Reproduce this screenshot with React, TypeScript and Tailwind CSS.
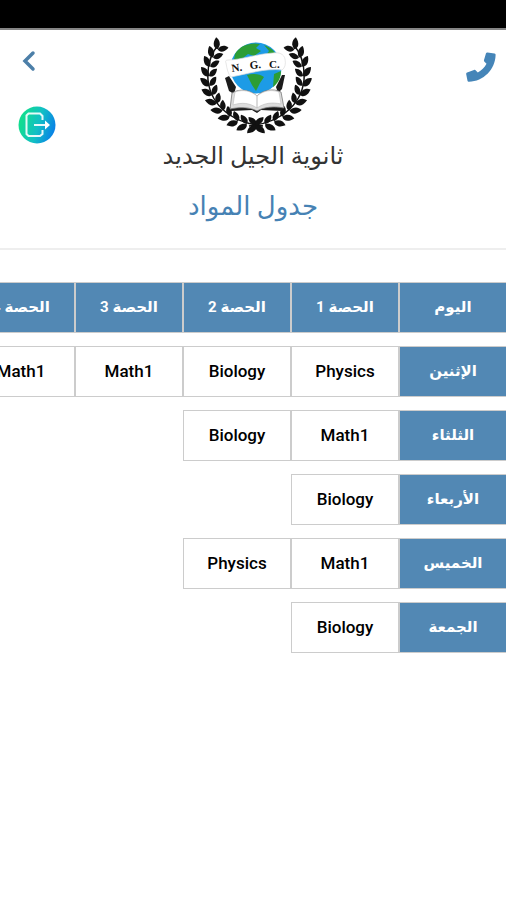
const periods = ['الحصة 1', 'الحصة 2', 'الحصة 3', 'الحصة 4']

const days = [
  { name: 'الإثنين', subjects: ['Physics', 'Biology', 'Math1', 'Math1'] },
  { name: 'الثلثاء', subjects: ['Math1', 'Biology'] },
  { name: 'الأربعاء', subjects: ['Biology'] },
  { name: 'الخميس', subjects: ['Math1', 'Physics'] },
  { name: 'الجمعة', subjects: ['Biology'] },
]

const LEAF = 'M0 0C1 -4 6 -5.500 12 -1C9 3 4 3.500 0 0Z'

// one half of the wreath, from the knot at the bottom up to the tip
function Branch() {
  const steps = Array.from({ length: 12 }, (_, i) => 90 + i * 11.4)
  return (
    <g>
      <path d="M73 96C44 93 21 77 18 50C17 35 21 23 29 14" fill="none" stroke="#111" strokeWidth="1.5" />
      {steps.map(deg => {
        const t = (deg * Math.PI) / 180
        const x = 66 + 47 * Math.cos(t)
        const y = 47 + 48 * Math.sin(t)
        return (
          <g key={deg} transform={`translate(${x} ${y}) rotate(${deg + 90})`} fill="#111">
            <path d={LEAF} transform="rotate(-38)" />
            <path d={LEAF} transform="rotate(42) scale(0.900 -0.900)" />
          </g>
        )
      })}
    </g>
  )
}

function Logo() {
  return (
    <svg viewBox="-2 0 130 110" className="h-[110px] w-[130px]" role="img" aria-label="N. G. C.">
      <Branch />
      <g transform="translate(132 0) scale(-1 1)">
        <Branch />
      </g>
      <circle cx="66" cy="38" r="25.500" fill="#1d9be6" />
      <path d="M45 24C50 15 61 12 70 14L66 18L71 21L64 26L58 24L53 28L44 30Z" fill="#2c9d35" />
      <path d="M74 15C82 18 88 24 90 32L80 31L76 25L79 21Z" fill="#2c9d35" />
      <path d="M57 45C63 43 70 44 74 47L70 53L66 61L62 55Z" fill="#2c9d35" />
      <path d="M84 44L91 41C91 48 88 53 83 57Z" fill="#2c9d35" />
      <path d="M35 48L39 46L46 57L44 64L39 61Z" fill="#1b1b1b" />
      <path d="M95 45L92 45L86 57L88 63L92 59Z" fill="#1b1b1b" />
      <path
        d="M36 33C35 31 36 30 38 30C51 30 66 24 83 23C89 22 94 24 95 29C96 34 95 38 92 40C75 38 57 44 41 47C38 44 37 39 36 33Z"
        fill="#fff"
        stroke="#ddd"
        strokeWidth="0.7"
      />
      <g fontFamily="Liberation Serif, serif" fontSize="11" fontWeight="700" fill="#111">
        <text x="42" y="42" transform="rotate(-8 42 42)">N.</text>
        <text x="60" y="39" transform="rotate(-5 60 39)">G.</text>
        <text x="79" y="38">C.</text>
      </g>
      <path d="M40 77L41 81L62 80L67 83L71 80L92 81L94 76Z" fill="#1b1b1b" />
      <path d="M42 63C50 58 60 60 67 66C73 60 83 58 91 62L94 78C84 76 74 77 67 81C60 77 50 77 40 79Z" fill="#ddd" stroke="#777" strokeWidth="0.8" />
      <path d="M45 62C53 59 61 61 67 66V78C60 73 52 72 43 75ZM67 66C73 61 81 59 89 62L91 74C82 72 74 73 67 78Z" fill="#fff" stroke="#bbb" strokeWidth="0.6" />
    </svg>
  )
}

function LogoutIcon() {
  return (
    <svg viewBox="0 0 38 38" className="size-[38px]" fill="none" aria-hidden="true">
      <defs>
        <linearGradient id="logout" x1="0" y1="0.300" x2="1" y2="0.600">
          <stop offset="0.100" stopColor="#12dc91" />
          <stop offset="0.550" stopColor="#12bfc5" />
          <stop offset="1" stopColor="#087fe8" />
        </linearGradient>
      </defs>
      <circle cx="19" cy="19" r="18.500" fill="url(#logout)" />
      <g stroke="#fff" strokeWidth="2" strokeOpacity="0.9">
        <path d="M24.500 14V10L22 7.500H10.500L8.500 9.500V28L10.500 30H22L24.500 28V24" />
        <path d="M16 19H29" />
      </g>
      <path d="M27 14.500L32 19L27 23.500Z" fill="#fff" />
    </svg>
  )
}

function PhoneIcon() {
  return (
    <svg viewBox="0 0 30 30" className="size-[30px]" fill="currentColor" aria-hidden="true">
      <path d="M21.500 0.500L28.500 1.500C29.300 1.700 29.700 2.200 29.600 3C29.300 17.500 17.500 29.300 3 29.800C2.200 29.800 1.700 29.500 1.500 28.700L0.200 22.300C0 21.500 0.400 20.900 1.100 20.600L8 18C8.700 17.700 9.400 17.900 9.800 18.500L11.800 20.500C15.500 18.500 18.500 15.500 20.500 11.800L18.500 9.800C17.900 9.300 17.800 8.700 18 8L20 1.300C20.300 0.700 20.800 0.400 21.500 0.500Z" />
    </svg>
  )
}

function Header() {
  return (
    <header className="grid grid-cols-[1fr_auto_1fr] border-b-2 border-[#eeeeee] pb-6">
      <div className="flex flex-col items-start gap-[34px] pt-5 pl-[18px]">
        <button type="button" aria-label="رجوع" className="px-1">
          <svg viewBox="0 0 14 22" className="h-[22px] w-[14px]" fill="none" aria-hidden="true">
            <path d="M11 3L3 11L11 19" stroke="#4c7fa8" strokeWidth="3.500" strokeLinecap="round" />
          </svg>
        </button>
        <button type="button" aria-label="تسجيل الخروج">
          <LogoutIcon />
        </button>
      </div>
      <div className="flex flex-col items-center text-center">
        <Logo />
        <p dir="rtl" className="text-2xl leading-8 text-[#333]">ثانوية الجيل الجديد</p>
        <h1 dir="rtl" className="mt-4 text-[26px] leading-9 text-[#4682b4]">جدول المواد</h1>
      </div>
      <div className="flex items-start justify-end pt-[22px] pr-[10px]">
        <a href="tel:" aria-label="اتصال" className="text-[#4585b8]">
          <PhoneIcon />
        </a>
      </div>
    </header>
  )
}

export default function App() {
  return (
    <div className="min-h-screen bg-white font-['Roboto','DejaVu_Sans',sans-serif]">
      <div className="h-[30px] border-b-2 border-[#858585] bg-black" />
      <Header />
      <main dir="rtl" className="overflow-hidden pt-[19px]">
        <table className="w-[539px] table-fixed border-separate border-spacing-x-0 border-spacing-y-[13px] text-center text-[17px] leading-5">
          <thead>
            <tr className="h-[51px] bg-[#5288b4] text-[15px] text-white">
              <th scope="col" className="w-[107px] border-y border-l border-[#ccc] pb-0.5 font-bold">اليوم</th>
              {periods.map(p => (
                <th key={p} scope="col" className="w-[108px] border border-[#ccc] pb-0.5 font-bold">{p}</th>
              ))}
            </tr>
          </thead>
          <tbody>
            {days.map(day => (
              <tr key={day.name} className="h-[51px]">
                <th scope="row" className="border-y border-l border-[#ccc] bg-[#5288b4] pb-0.5 text-[15px] font-bold text-white">{day.name}</th>
                {day.subjects.map((subject, i) => (
                  <td key={i} className="border border-[#ccc] pb-0.5 font-medium text-black">{subject}</td>
                ))}
              </tr>
            ))}
          </tbody>
        </table>
      </main>
    </div>
  )
}
